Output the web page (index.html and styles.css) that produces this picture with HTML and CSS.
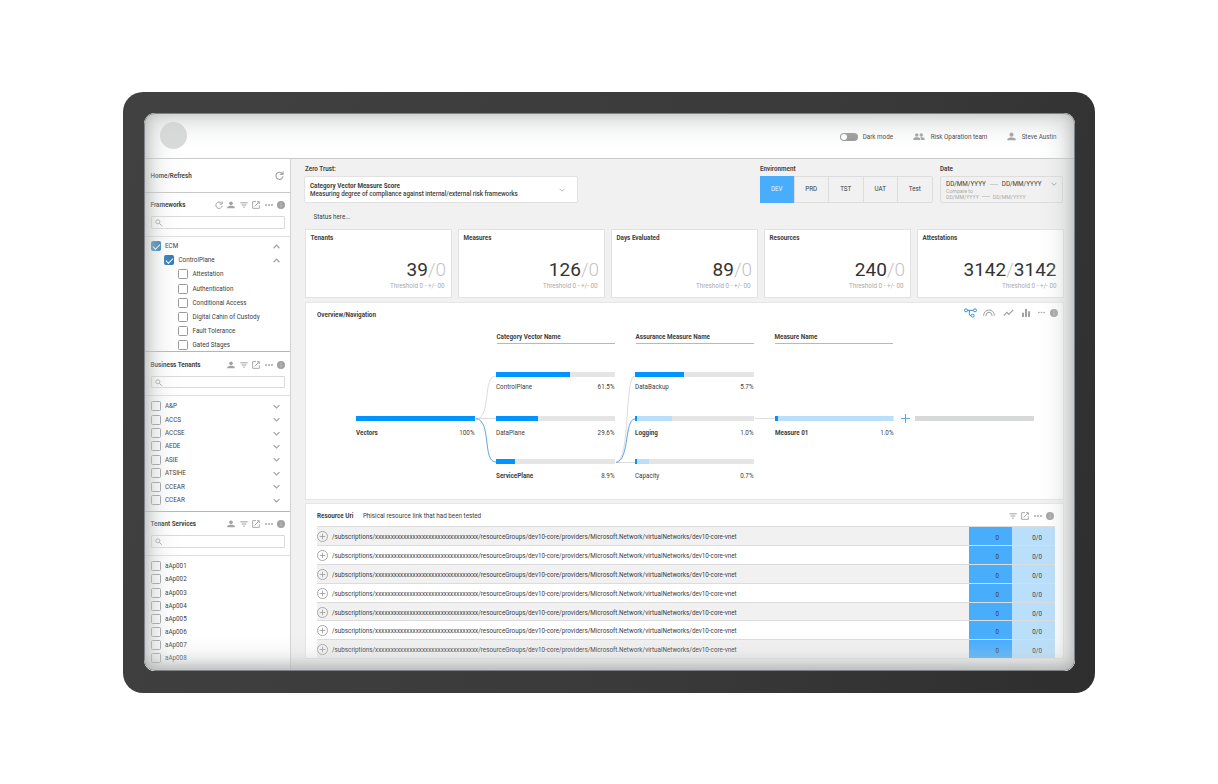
FILE: index.html
```html
<!DOCTYPE html>
<html lang="en">
<head>
    <meta charset="UTF-8">
    <meta name="viewport" content="width=device-width, initial-scale=1.0">
    <title>Zero Trust Dashboard</title>
    <link rel="stylesheet" href="styles.css">
</head>
<body>
    <svg class="sprite" width="0" height="0">
        <symbol id="i-refresh" viewBox="0 0 24 24"><path fill="none" stroke="currentColor" stroke-width="3" d="M20 7.500A9.500 9.500 0 1 0 21.500 14M21.500 1v8h-8"/></symbol>
        <symbol id="i-user" viewBox="0 0 24 24"><circle cx="12" cy="7" r="5.500"/><path d="M1 22v-3c0-3 6-4.500 11-4.500s11 1.500 11 4.500v3z"/></symbol>
        <symbol id="i-users" viewBox="0 0 32 24"><circle cx="10" cy="8" r="4.500"/><circle cx="22" cy="8" r="4.500"/><path d="M1 21v-3c0-3 5-4 9-4s9 1 9 4v3zM21 21v-3c0-2-1-3.200-2.500-4 5-.5 12.500.5 12.500 4v3z"/></symbol>
        <symbol id="i-filter" viewBox="0 0 24 24"><path fill="none" stroke="currentColor" stroke-width="3" d="M1 5.500h22M5 12h14M9.500 18.500h5"/></symbol>
        <symbol id="i-open" viewBox="0 0 24 24"><path fill="none" stroke="currentColor" stroke-width="2.800" d="M12 2H2v20h20V13M15 2h7V9M21 3 8 16"/></symbol>
        <symbol id="i-more" viewBox="0 0 24 24"><circle cx="3" cy="12" r="2.800"/><circle cx="12" cy="12" r="2.800"/><circle cx="21" cy="12" r="2.800"/></symbol>
        <symbol id="i-info" viewBox="0 0 24 24"><circle cx="12" cy="12" r="12"/><path fill="#c4c4c4" d="M10.500 5.500h3v3h-3zM10.500 10.500h3v8h-3z"/></symbol>
        <symbol id="i-search" viewBox="0 0 24 24"><g fill="none" stroke="currentColor" stroke-width="3"><circle cx="9" cy="9" r="6.500"/><path d="m14 14 8 8"/></g></symbol>
        <symbol id="i-up" viewBox="0 0 24 24"><path fill="none" stroke="currentColor" stroke-width="4" d="m2 18 10-11 10 11"/></symbol>
        <symbol id="i-down" viewBox="0 0 24 24"><path fill="none" stroke="currentColor" stroke-width="4" d="m2 7 10 10L22 7"/></symbol>
        <symbol id="i-plus" viewBox="0 0 24 24"><g fill="none" stroke="currentColor" stroke-width="2"><circle cx="12" cy="12" r="11"/><path d="M12 6v12M6 12h12"/></g></symbol>
        <symbol id="i-tree" viewBox="0 0 39 30"><g fill="none" stroke="currentColor" stroke-width="3"><circle cx="6" cy="7" r="4.500"/><circle cx="33" cy="7" r="4.500"/><circle cx="26" cy="23" r="4.500"/><path d="M10 7h18M16 7v10q0 6 5 6"/></g></symbol>
        <symbol id="i-gauge" viewBox="0 0 36 24"><path fill="none" stroke="currentColor" stroke-width="3" d="M2 21v-2a16 16 0 0 1 32 0v2M9 21v-2a9 9 0 0 1 18 0v2"/></symbol>
        <symbol id="i-line" viewBox="0 0 32 24"><path fill="none" stroke="currentColor" stroke-width="3.500" d="m2 20 9-10 6 6L30 3"/></symbol>
        <symbol id="i-bars" viewBox="0 0 24 24"><path d="M0 11h6v13H0zM9 0h6v24H9zM18 7h6v17h-6z"/></symbol>
    </svg>

    <div class="monitor">
        <div class="screen">
            <header class="topbar">
                <div class="logo"></div>
                <div class="user-menu">
                    <span class="toggle"></span>
                    <span class="mode">Dark mode</span>
                    <svg class="team-icon"><use href="#i-users"/></svg>
                    <span class="team">Risk Oparation team</span>
                    <svg class="icon"><use href="#i-user"/></svg>
                    <span class="user">Steve Austin</span>
                </div>
            </header>

            <div class="layout">
                <aside class="sidebar">
                    <div class="home">
                        <span>Home/Refresh</span>
                        <svg class="icon"><use href="#i-refresh"/></svg>
                    </div>

                    <section class="group">
                        <div class="group-head">
                            <div class="group-title">
                                <span>Frameworks</span>
                                <div class="tools">
                                    <svg><use href="#i-refresh"/></svg>
                                    <svg><use href="#i-user"/></svg>
                                    <svg><use href="#i-filter"/></svg>
                                    <svg><use href="#i-open"/></svg>
                                    <svg><use href="#i-more"/></svg>
                                    <svg><use href="#i-info"/></svg>
                                </div>
                            </div>
                            <div class="search"><svg><use href="#i-search"/></svg></div>
                        </div>
                        <ul class="list frameworks">
                            <li><i class="box checked"></i>ECM<svg><use href="#i-up"/></svg></li>
                            <li class="level-1"><i class="box checked"></i>ControlPlane<svg><use href="#i-up"/></svg></li>
                            <li class="level-2"><i class="box"></i>Attestation</li>
                            <li class="level-2"><i class="box"></i>Authentication</li>
                            <li class="level-2"><i class="box"></i>Conditional Access</li>
                            <li class="level-2"><i class="box"></i>Digital Cahin of Custody</li>
                            <li class="level-2"><i class="box"></i>Fault Tolerance</li>
                            <li class="level-2"><i class="box"></i>Gated Stages</li>
                        </ul>
                    </section>

                    <section class="group">
                        <div class="group-head">
                            <div class="group-title">
                                <span>Business Tenants</span>
                                <div class="tools">
                                    <svg><use href="#i-user"/></svg>
                                    <svg><use href="#i-filter"/></svg>
                                    <svg><use href="#i-open"/></svg>
                                    <svg><use href="#i-more"/></svg>
                                    <svg><use href="#i-info"/></svg>
                                </div>
                            </div>
                            <div class="search"><svg><use href="#i-search"/></svg></div>
                        </div>
                        <ul class="list tenants">
                            <li><i class="box"></i>A&amp;P<svg><use href="#i-down"/></svg></li>
                            <li><i class="box"></i>ACCS<svg><use href="#i-down"/></svg></li>
                            <li><i class="box"></i>ACCSE<svg><use href="#i-down"/></svg></li>
                            <li><i class="box"></i>AEDE<svg><use href="#i-down"/></svg></li>
                            <li><i class="box"></i>ASIE<svg><use href="#i-down"/></svg></li>
                            <li><i class="box"></i>ATSIHE<svg><use href="#i-down"/></svg></li>
                            <li><i class="box"></i>CCEAR<svg><use href="#i-down"/></svg></li>
                            <li><i class="box"></i>CCEAR<svg><use href="#i-down"/></svg></li>
                        </ul>
                    </section>

                    <section class="group">
                        <div class="group-head">
                            <div class="group-title">
                                <span>Tenant Services</span>
                                <div class="tools">
                                    <svg><use href="#i-user"/></svg>
                                    <svg><use href="#i-filter"/></svg>
                                    <svg><use href="#i-open"/></svg>
                                    <svg><use href="#i-more"/></svg>
                                    <svg><use href="#i-info"/></svg>
                                </div>
                            </div>
                            <div class="search"><svg><use href="#i-search"/></svg></div>
                        </div>
                        <ul class="list services">
                            <li><i class="box"></i>aAp001</li>
                            <li><i class="box"></i>aAp002</li>
                            <li><i class="box"></i>aAp003</li>
                            <li><i class="box"></i>aAp004</li>
                            <li><i class="box"></i>aAp005</li>
                            <li><i class="box"></i>aAp006</li>
                            <li><i class="box"></i>aAp007</li>
                            <li><i class="box"></i>aAp008</li>
                        </ul>
                    </section>
                </aside>

                <main class="content">
                    <div class="filters">
                        <div class="filter-score">
                            <label>Zero Trust:</label>
                            <div class="select">
                                <div>
                                    <strong>Category Vector Measure Score</strong>
                                    <p>Measuring degree of compliance against internal/external risk frameworks</p>
                                </div>
                                <svg><use href="#i-down"/></svg>
                            </div>
                        </div>
                        <div class="filter-env">
                            <label>Environment</label>
                            <div class="env">
                                <span class="active">DEV</span>
                                <span>PRD</span>
                                <span>TST</span>
                                <span>UAT</span>
                                <span>Test</span>
                            </div>
                        </div>
                        <div class="filter-date">
                            <label>Date</label>
                            <div class="date">
                                <div class="range"><span>DD/MM/YYYY</span><i></i><span>DD/MM/YYYY</span><svg><use href="#i-down"/></svg></div>
                                <div class="compare">Compare to</div>
                                <div class="range compare"><span>DD/MM/YYYY</span><i></i><span>DD/MM/YYYY</span></div>
                            </div>
                        </div>
                    </div>

                    <p class="status">Status here...</p>

                    <div class="cards">
                        <div class="card"><h3>Tenants</h3><div class="value">39<em>/0</em></div><p>Threshold 0 - +/- 00</p></div>
                        <div class="card"><h3>Measures</h3><div class="value">126<em>/0</em></div><p>Threshold 0 - +/- 00</p></div>
                        <div class="card"><h3>Days Evaluated</h3><div class="value">89<em>/0</em></div><p>Threshold 0 - +/- 00</p></div>
                        <div class="card"><h3>Resources</h3><div class="value">240<em>/0</em></div><p>Threshold 0 - +/- 00</p></div>
                        <div class="card"><h3>Attestations</h3><div class="value">3142<em>/</em>3142</div><p>Threshold 0 - +/- 00</p></div>
                    </div>

                    <section class="panel overview">
                        <div class="panel-head">
                            <h3>Overview/Navigation</h3>
                            <div class="views">
                                <svg class="v-tree"><use href="#i-tree"/></svg>
                                <svg class="v-gauge"><use href="#i-gauge"/></svg>
                                <svg class="v-line"><use href="#i-line"/></svg>
                                <svg class="v-bars"><use href="#i-bars"/></svg>
                                <svg class="v-more"><use href="#i-more"/></svg>
                                <svg class="v-info"><use href="#i-info"/></svg>
                            </div>
                        </div>
                        <div class="columns">
                            <h3>Category Vector Name</h3>
                            <h3>Assurance Measure Name</h3>
                            <h3>Measure Name</h3>
                        </div>

                        <svg class="links" viewBox="0 0 758 197">
                            <g fill="none" stroke="#dcdcdc">
                                <path d="M171 115.500C187 113 177 72 191 72M171 114.500H191M311 158.500C326 156 319 72 330 72M311 158.500H330M450 114.500H470"/>
                                <path stroke="#5aa7df" d="M171 114.500C187 117 177 158 191 158M311 158.500C325 156 319 115 330 115"/>
                            </g>
                        </svg>

                        <div class="node c1 r2"><div class="bar"><i style="width: 100%"></i></div><p><b>Vectors</b><span>100%</span></p></div>
                        <div class="node c2 r1"><div class="bar"><i style="width: 63%"></i></div><p>ControlPlane<span>61.5%</span></p></div>
                        <div class="node c2 r2"><div class="bar"><i style="width: 36%"></i></div><p>DataPlane<span>29.6%</span></p></div>
                        <div class="node c2 r3"><div class="bar"><i style="width: 16%"></i></div><p><b>ServicePlane</b><span>8.9%</span></p></div>
                        <div class="node c3 r1"><div class="bar"><i style="width: 42%"></i></div><p>DataBackup<span>5.7%</span></p></div>
                        <div class="node c3 r2"><div class="bar"><i style="width: 2.5%"></i><i class="soft" style="width: 29%"></i></div><p><b>Logging</b><span>1.0%</span></p></div>
                        <div class="node c3 r3"><div class="bar"><i style="width: 2.5%"></i><i class="soft" style="width: 9.500%"></i></div><p>Capacity<span>0.7%</span></p></div>
                        <div class="node c4 r2"><div class="bar"><i style="width: 3%"></i><i class="soft" style="width: 97%"></i></div><p><b>Measure 01</b><span>1.0%</span></p></div>
                        <div class="add"></div>
                        <div class="node c5 r2"><div class="bar empty"></div></div>
                    </section>

                    <section class="panel resources">
                        <div class="panel-head">
                            <h3>Resource Uri</h3>
                            <span class="note">Phisical resource link that had been tested</span>
                            <div class="tools">
                                <svg><use href="#i-filter"/></svg>
                                <svg><use href="#i-open"/></svg>
                                <svg><use href="#i-more"/></svg>
                                <svg><use href="#i-info"/></svg>
                            </div>
                        </div>
                        <div class="rows">
                            <div class="row"><svg><use href="#i-plus"/></svg><span class="uri">/subscriptions/xxxxxxxxxxxxxxxxxxxxxxxxxxxxxxxxx/resourceGroups/dev10-core/providers/Microsoft.Network/virtualNetworks/dev10-core-vnet</span><span class="count">0</span><span class="ratio">0/0</span></div>
                            <div class="row"><svg><use href="#i-plus"/></svg><span class="uri">/subscriptions/xxxxxxxxxxxxxxxxxxxxxxxxxxxxxxxxx/resourceGroups/dev10-core/providers/Microsoft.Network/virtualNetworks/dev10-core-vnet</span><span class="count">0</span><span class="ratio">0/0</span></div>
                            <div class="row"><svg><use href="#i-plus"/></svg><span class="uri">/subscriptions/xxxxxxxxxxxxxxxxxxxxxxxxxxxxxxxxx/resourceGroups/dev10-core/providers/Microsoft.Network/virtualNetworks/dev10-core-vnet</span><span class="count">0</span><span class="ratio">0/0</span></div>
                            <div class="row"><svg><use href="#i-plus"/></svg><span class="uri">/subscriptions/xxxxxxxxxxxxxxxxxxxxxxxxxxxxxxxxx/resourceGroups/dev10-core/providers/Microsoft.Network/virtualNetworks/dev10-core-vnet</span><span class="count">0</span><span class="ratio">0/0</span></div>
                            <div class="row"><svg><use href="#i-plus"/></svg><span class="uri">/subscriptions/xxxxxxxxxxxxxxxxxxxxxxxxxxxxxxxxx/resourceGroups/dev10-core/providers/Microsoft.Network/virtualNetworks/dev10-core-vnet</span><span class="count">0</span><span class="ratio">0/0</span></div>
                            <div class="row"><svg><use href="#i-plus"/></svg><span class="uri">/subscriptions/xxxxxxxxxxxxxxxxxxxxxxxxxxxxxxxxx/resourceGroups/dev10-core/providers/Microsoft.Network/virtualNetworks/dev10-core-vnet</span><span class="count">0</span><span class="ratio">0/0</span></div>
                            <div class="row"><svg><use href="#i-plus"/></svg><span class="uri">/subscriptions/xxxxxxxxxxxxxxxxxxxxxxxxxxxxxxxxx/resourceGroups/dev10-core/providers/Microsoft.Network/virtualNetworks/dev10-core-vnet</span><span class="count">0</span><span class="ratio">0/0</span></div>
                        </div>
                    </section>
                </main>
            </div>
        </div>
    </div>
</body>
</html>
```
FILE: styles.css
```css
* {
    margin: 0;
    padding: 0;
    box-sizing: border-box;
}

body {
    font-family: Roboto, sans-serif;
    font-size: 6.3px;
    line-height: 8px;
    color: #404040;
    background: #fff;
    height: 784px;
    padding: 92px 123px;
    overflow: hidden;
}

svg {
    fill: currentColor;
    color: #a2a2a2;
    flex: none;
}

.sprite {
    display: none;
}

h3, label, strong, b {
    font-size: 6.3px;
    font-weight: 700;
    line-height: 8px;
}

/* monitor */
.monitor {
    width: 972px;
    height: 601px;
    padding: 21px 20px 22px 21px;
    border-radius: 20px;
    background: linear-gradient(110deg, #414141, #3a3a3a 60%, #2e2e2e);
}

.screen {
    position: relative;
    width: 931px;
    height: 558px;
    padding: 0 0 0 1px;
    border-radius: 11px;
    overflow: hidden;
    background: #fff;
}

/* glass edge and vignette over the whole screen */
.screen::after {
    content: "";
    position: absolute;
    inset: 0;
    border-radius: 11px;
    border: 1.5px solid #808186;
    box-shadow: inset 0 -3px 12px 1px rgba(120, 128, 124, 0.4), inset 0 0 26px 8px rgba(205, 209, 207, 0.85);
    pointer-events: none;
}

/* top bar */
.topbar {
    height: 46px;
    display: flex;
    align-items: center;
    justify-content: space-between;
    padding: 1px 18.500px 0 15px;
    border-bottom: 1px solid #c9caca;
}

.logo {
    width: 27px;
    height: 27px;
    border-radius: 50%;
    margin-bottom: 1px;
    background: #d8dbda;
}

.user-menu {
    display: flex;
    align-items: center;
    padding-top: 1px;
}

.toggle {
    width: 18px;
    height: 8px;
    border-radius: 4px;
    background: #999;
    padding: 1px;
}

.toggle::before {
    content: "";
    display: block;
    width: 6px;
    height: 6px;
    border-radius: 50%;
    background: #fff;
}

.mode {
    margin-left: 5px;
    width: 50px;
}

.team-icon {
    width: 12px;
    height: 9px;
    margin-right: 6px;
}

.team {
    width: 76px;
}

.user-menu .icon {
    width: 9px;
    height: 9px;
    margin-right: 6px;
}

.layout {
    display: flex;
    height: 512px;
}

/* sidebar */
.sidebar {
    width: 146px;
    border-right: 1px solid #d2d2d2;
    background: #fff;
}

.home {
    height: 33.500px;
    display: flex;
    align-items: center;
    justify-content: space-between;
    padding: 1px 6px 0 5.500px;
    font-weight: 600;
    border-bottom: 1px solid #c8c8c8;
}

.home .icon {
    width: 9px;
    height: 9px;
}

.group {
    height: 159.500px;
    border-bottom: 1px solid #b5b5b5;
}

.group:last-child {
    border-bottom: none;
}

.group-head {
    height: 44px;
    padding: 7.500px 5px 0 5.500px;
    border-bottom: 1px solid #e0e0e0;
}

.group-title {
    display: flex;
    justify-content: space-between;
    align-items: center;
    height: 10px;
    font-weight: 700;
}

.tools {
    display: flex;
    gap: 4.500px;
    align-items: center;
}

.tools svg {
    width: 8px;
    height: 8px;
}

.search {
    height: 12.500px;
    margin-top: 6px;
    border: 1px solid #d9d9d9;
    border-radius: 1px;
    padding: 2px 2px 2px 3px;
}

.search svg {
    display: block;
    width: 7.500px;
    height: 7.500px;
}

.list {
    list-style: none;
    padding: 3.500px 10px 0 5.500px;
}

.list li {
    height: 13.430px;
    display: flex;
    align-items: center;
}

.list svg {
    width: 7px;
    height: 7px;
    margin-left: auto;
}

.frameworks {
    padding-top: 2.500px;
}

.frameworks li {
    height: 14.200px;
}

.services li {
    height: 12.850px;
}

.services li:nth-child(-n+4) {
    height: 13.500px;
}

.box {
    width: 10px;
    height: 10px;
    margin-right: 4.500px;
    border: 1px solid #999;
    border-radius: 1.500px;
    flex: none;
}

.box.checked {
    border-color: #2a7ab5;
    background: #2a7ab5;
}

.box.checked::before {
    content: "";
    display: block;
    width: 6px;
    height: 3px;
    margin: 1.500px 0 0 1px;
    border: solid #fff;
    border-width: 0 0 1px 1px;
    transform: rotate(-45deg);
}

.level-1 {
    padding-left: 13.500px;
}

.level-2 {
    padding-left: 27.500px;
}

/* content */
.content {
    flex: 1;
    background: #f1f1f1;
    padding: 6px 11px 0 12.500px;
}

.filters {
    display: flex;
}

.filters label {
    display: block;
    height: 8px;
    margin-bottom: 2.500px;
    font-weight: 600;
}

.filter-score {
    width: 456.500px;
}

.filter-score label {
    padding-left: 1.500px;
}

.select {
    width: 274px;
    height: 27px;
    display: flex;
    align-items: center;
    justify-content: space-between;
    padding: 1px 12px 0 5.500px;
    background: #fff;
    border: 1px solid #e2e2e2;
    border-radius: 2px;
}

.select p {
    font-weight: 500;
    letter-spacing: -0.03px;
}

.select strong {
    display: block;
}

.select svg {
    width: 6px;
    height: 6px;
    color: #bbb;
}

.filter-env {
    width: 180px;
}

.env {
    display: flex;
    width: 172.500px;
    height: 27px;
    border: 1px solid #ddd;
    border-radius: 2px;
}

.env span {
    flex: 1;
    line-height: 25px;
    text-align: center;
    border-left: 1px solid #ddd;
}

.env .active {
    margin: -1px 0 -1px -1px;
    line-height: 27px;
    background: #48aefc;
    color: #e4f3ff;
    border: none;
}

.date {
    width: 123px;
    height: 27px;
    padding: 4px 5px;
    border: 1px solid #ddd;
    border-radius: 2px;
}

.range {
    display: flex;
    align-items: center;
    height: 7px;
}

.range i {
    width: 8px;
    height: 1px;
    margin: 0 4px;
    background: #ccc;
}

.range svg {
    width: 6px;
    height: 6px;
    margin-left: auto;
}

.compare {
    height: 6px;
    font-size: 5.200px;
    line-height: 6px;
    color: #aaa;
}

.compare i {
    margin: 0 3px;
}

.status {
    margin: 10px 0 0 10px;
}

.cards {
    display: grid;
    grid-template-columns: repeat(5, 147px);
    gap: 6px;
    margin: 8px 0 0 1px;
}

.card {
    height: 69px;
    background: #fff;
    border: 1px solid #e2e2e2;
    padding: 4px 6px 0 5px;
    text-align: right;
}

.card h3 {
    text-align: left;
}

.card .value {
    margin: 17px -1.500px 0 0;
    font-size: 19px;
    line-height: 22px;
    color: #333;
}

.card:last-child .value {
    margin-right: 0;
}

.card em {
    font-style: normal;
    font-weight: 300;
    color: #c4c4c4;
}

.card p {
    margin-top: 1.500px;
    color: #aaa;
}

.panel {
    width: 759px;
    margin-left: 1px;
    background: #fff;
    border: 1px solid #e6e6e6;
}

.panel-head {
    display: flex;
    align-items: center;
}

.overview {
    position: relative;
    height: 198px;
    margin-top: 4px;
}

.overview .panel-head {
    height: 10px;
    margin: 7.500px 5px 0 11.500px;
    justify-content: space-between;
}

.views {
    display: flex;
    align-items: center;
    height: 10px;
    margin-bottom: 5px;
}

.v-tree {
    width: 13px;
    height: 10px;
    margin-right: 6px;
    color: #2d91d8;
}

.v-gauge {
    width: 12px;
    height: 8px;
    margin-right: 8px;
}

.v-line {
    width: 11px;
    height: 8px;
    margin-right: 8px;
}

.v-bars {
    width: 8px;
    height: 8px;
    margin-right: 8px;
}

.v-more {
    width: 7px;
    height: 7px;
    margin-right: 5px;
}

.v-info {
    width: 8px;
    height: 8px;
}

.columns {
    display: grid;
    grid-template-columns: repeat(3, 118px);
    gap: 21px;
    margin: 12.500px 0 0 191px;
}

.columns h3 {
    height: 11px;
    border-bottom: 1px solid #b8b8b8;
}

/* diagram nodes */
.links {
    position: absolute;
    left: -1px;
    top: 1px;
    width: 758px;
    height: 197px;
}

.node {
    position: absolute;
    width: 119px;
}

.c1 { left: 50px; }
.c2 { left: 190px; }
.c3 { left: 329px; }
.c4 { left: 469px; }
.c5 { left: 609px; }

.r1 { top: 69px; }
.r2 { top: 113px; }
.r3 { top: 156px; }

.bar {
    display: flex;
    height: 5.500px;
    background: #e5e5e5;
}

.bar i {
    background: #0094ff;
}

.bar .soft {
    background: #b9dffb;
}

.bar.empty {
    background: #d7d9d8;
}

.node p {
    display: flex;
    justify-content: space-between;
    margin-top: 7.500px;
    padding-left: 0.500px;
}

.r1 p {
    margin-top: 5.500px;
}

.add {
    position: absolute;
    left: 595px;
    top: 111px;
    width: 9px;
    height: 9px;
    background: linear-gradient(#5ba8e2, #5ba8e2) center / 9px 1px no-repeat,
        linear-gradient(#5ba8e2, #5ba8e2) center / 1px 9px no-repeat;
}

/* resources */
.resources {
    margin-top: 3.500px;
    height: 156px;
    padding: 0 7.500px 0 11.500px;
}

.resources .panel-head {
    height: 22px;
    padding-top: 2px;
}

.note {
    margin-left: 9.500px;
}

.resources .tools {
    margin-left: auto;
    margin-right: 1px;
}

.row {
    display: flex;
    align-items: center;
    height: 18.900px;
    border-top: 1px solid #dcdcdc;
}

.row:nth-child(odd) {
    background: #f1f1f1;
}

.row svg {
    width: 11px;
    height: 11px;
    margin: 1px 4px 0 0;
}

.uri {
    flex: 1;
    padding-top: 2px;
    white-space: nowrap;
}

.count, .ratio {
    width: 43px;
    height: 100%;
    padding-right: 13px;
    line-height: 22px;
    text-align: right;
    background: #48aefc;
}

.ratio {
    background: #b9dffb;
}
```
